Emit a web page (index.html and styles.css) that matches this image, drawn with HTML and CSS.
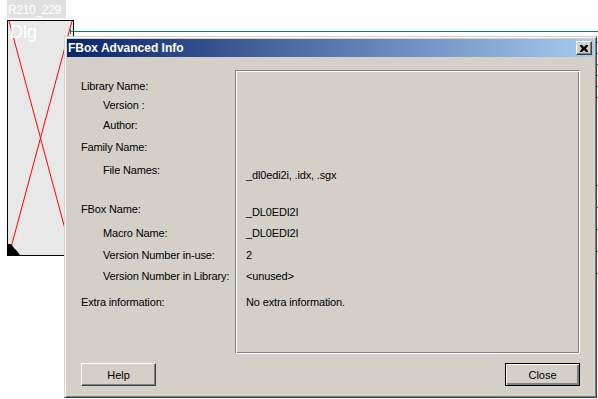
FILE: index.html
```html
<!DOCTYPE html>
<html lang="en">
<head>
  <meta charset="UTF-8" />
  <title>FBox Advanced Info</title>
  <link rel="stylesheet" href="styles.css">
</head>
<body>
  <div class="canvas">
    <div class="tag">R210_229</div>
    <div class="block">
      <svg class="block-x" width="65" height="234" viewBox="0 0 65 234">
        <line x1="1" y1="0" x2="64" y2="234" stroke="#ff0000" stroke-width="1" />
        <line x1="64" y1="0" x2="1" y2="234" stroke="#ff0000" stroke-width="1" />
        <polygon points="0,223 3,223 6,227 9,230 12,234 0,234" fill="#000" />
      </svg>
      <span class="block-name">Dlg</span>
    </div>
    <div class="wire"></div>
    <div class="wire-end"></div>
    <div class="ticks">
      <i style="top:42px"></i><i style="top:53px"></i><i style="top:64px"></i>
      <i style="top:75px"></i><i style="top:86px"></i><i style="top:97px"></i>
      <i style="top:185px"></i><i style="top:207px"></i><i style="top:229px"></i>
      <i style="top:251px"></i><i style="top:273px"></i>
    </div>

    <div class="dialog">
      <div class="titlebar">
        <span class="title">FBox Advanced Info</span>
        <button class="title-close">
          <svg width="8" height="7" viewBox="0 0 8 7">
            <path d="M0 0h2l2 2 2-2h2v1l-2 2.5 2 2.5v1h-2l-2-2-2 2h-2v-1l2-2.5-2-2.5z" fill="#000" />
          </svg>
        </button>
      </div>
      <div class="dialog-body">
        <div class="info">
          <div class="panel"></div>
          <div class="label r1">Library Name:</div>
          <div class="label sub r2">Version :</div>
          <div class="label sub r3">Author:</div>
          <div class="label r4">Family Name:</div>
          <div class="label sub r5">File Names:</div>
          <div class="value r5 low">_dl0edi2i, .idx, .sgx</div>
          <div class="label r6">FBox Name:</div>
          <div class="value r6 mid">_DL0EDI2I</div>
          <div class="label sub r7">Macro Name:</div>
          <div class="value r7">_DL0EDI2I</div>
          <div class="label sub r8">Version Number in-use:</div>
          <div class="value r8">2</div>
          <div class="label sub r9">Version Number in Library:</div>
          <div class="value r9">&lt;unused&gt;</div>
          <div class="label r10">Extra information:</div>
          <div class="value r10">No extra information.</div>
        </div>
        <div class="buttons">
          <button class="btn">Help</button>
          <button class="btn default">Close</button>
        </div>
      </div>
    </div>
  </div>
</body>
</html>
```

FILE: styles.css
```css
body {
  margin: 0;
  background: #fff;
  font-family: "Liberation Sans", Arial, sans-serif;
}
.canvas {
  position: relative;
  width: 598px;
  height: 399px;
  overflow: hidden;
  background: #fff;
}

/* diagram behind the dialog */
.tag {
  position: absolute;
  left: 7px;
  top: 0;
  width: 59px;
  height: 18px;
  background: #e0e0e0;
  color: #fff;
  font-size: 12px;
  letter-spacing: -0.3px;
  line-height: 20px;
  padding-left: 1px;
  box-sizing: border-box;
  white-space: nowrap;
  overflow: hidden;
}
.block {
  position: absolute;
  left: 7px;
  top: 20px;
  width: 67px;
  height: 236px;
  box-sizing: border-box;
  border: 1px solid #000;
  background: #e8e8e8;
}
.block-x {
  position: absolute;
  left: 0;
  top: 0;
}
.block-name {
  position: absolute;
  left: 2px;
  top: 0;
  color: #fff;
  font-size: 18px;
  line-height: 22px;
}
.wire {
  position: absolute;
  left: 70px;
  top: 31px;
  width: 528px;
  height: 1px;
  background: #008080;
}
.wire-end {
  position: absolute;
  left: 70px;
  top: 29px;
  width: 1px;
  height: 5px;
  background: #008080;
}
.ticks i {
  position: absolute;
  left: 597px;
  width: 2px;
  height: 1px;
  background: #008080;
}

/* classic dialog window */
.dialog {
  position: absolute;
  left: 64px;
  top: 36px;
  width: 533px;
  height: 362px;
  box-sizing: border-box;
  background: #d4d0c8;
  border: 1px solid;
  border-color: #d4d0c8 #404040 #404040 #d4d0c8;
  box-shadow: inset 1px 1px #fff, inset -1px -1px #808080;
  padding: 2px;
  display: flex;
  flex-direction: column;
}
.titlebar {
  height: 18px;
  display: flex;
  align-items: center;
  justify-content: space-between;
  background: linear-gradient(to right, #0a246a, #a6caf0);
  padding: 0 2px 0 1px;
}
.title {
  color: #fff;
  font-weight: bold;
  font-size: 12px;
  line-height: 18px;
}
.title-close {
  width: 16px;
  height: 14px;
  padding: 0;
  display: flex;
  align-items: center;
  justify-content: center;
  background: #d4d0c8;
  border: 1px solid;
  border-color: #fff #404040 #404040 #fff;
  box-shadow: inset -1px -1px #808080;
}
.dialog-body {
  flex: 1;
  padding: 13px 14px 0 14px;
  font-size: 11px;
  color: #000;
}
.info {
  display: grid;
  grid-template-columns: 154px 345px;
  grid-template-rows: 10px 19px 20px 22px 23px 39px 24px 22px 21px 26px 1fr;
  height: 284px;
}
.panel {
  grid-column: 2;
  grid-row: 1 / -1;
  border: 1px solid;
  border-color: #808080 #fff #fff #808080;
  box-shadow: inset 1px 1px #fff, inset -1px -1px #808080;
}
.label {
  grid-column: 1;
  line-height: 13px;
  letter-spacing: -0.15px;
}
.label.sub {
  padding-left: 22px;
}
.value {
  grid-column: 2;
  line-height: 13px;
  padding-left: 11px;
  letter-spacing: -0.15px;
}
.value.low { margin-top: 5px; }
.value.mid { margin-top: 3px; }
.r1 { grid-row: 2; }
.r2 { grid-row: 3; }
.r3 { grid-row: 4; }
.r4 { grid-row: 5; }
.r5 { grid-row: 6; }
.r6 { grid-row: 7; }
.r7 { grid-row: 8; }
.r8 { grid-row: 9; }
.r9 { grid-row: 10; }
.r10 { grid-row: 11; }

.buttons {
  display: flex;
  justify-content: space-between;
  margin-top: 9px;
}
.btn {
  width: 75px;
  height: 23px;
  padding: 0;
  font-family: "Liberation Sans", Arial, sans-serif;
  font-size: 11px;
  color: #000;
  background: #d4d0c8;
  border: 1px solid;
  border-color: #fff #404040 #404040 #fff;
  box-shadow: inset -1px -1px #808080;
}
.btn.default {
  border-color: #000;
  box-shadow: inset 1px 1px #fff, inset -2px -2px #808080, inset -1px -1px #404040;
}
```
